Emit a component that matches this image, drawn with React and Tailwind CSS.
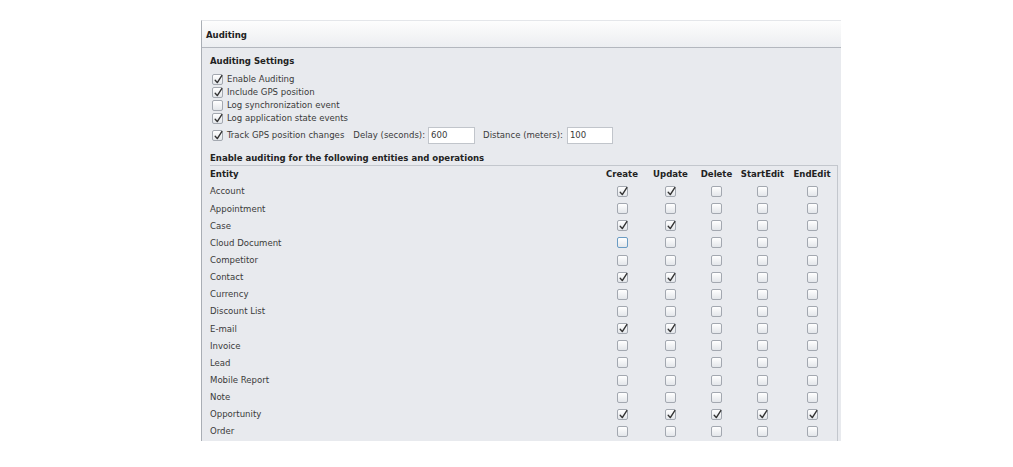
import React from "react";

const font = { fontFamily: '"DejaVu Sans Condensed", "DejaVu Sans", sans-serif' };

function Check({ checked, focus }) {
  return (
    <span
      className={
        "relative inline-flex w-[11px] h-[11px] rounded-[2px] border bg-gradient-to-b from-white to-[#e3e6ea] " +
        (focus ? "border-[#6a9cc4]" : "border-[#a3a8b0]")
      }
    >
      {checked ? (
        <svg viewBox="0 0 11 11" className="absolute left-[0px] top-[-1px] w-[11px] h-[11px]">
          <path d="M2.2 6.2 L4.3 8.6 L8.8 1.6" fill="none" stroke="#333" strokeWidth="1.4" strokeLinecap="round" strokeLinejoin="round" />
        </svg>
      ) : null}
    </span>
  );
}

const rows = [
  ["Account", [1, 1, 0, 0, 0]],
  ["Appointment", [0, 0, 0, 0, 0]],
  ["Case", [1, 1, 0, 0, 0]],
  ["Cloud Document", [0, 0, 0, 0, 0], true],
  ["Competitor", [0, 0, 0, 0, 0]],
  ["Contact", [1, 1, 0, 0, 0]],
  ["Currency", [0, 0, 0, 0, 0]],
  ["Discount List", [0, 0, 0, 0, 0]],
  ["E-mail", [1, 1, 0, 0, 0]],
  ["Invoice", [0, 0, 0, 0, 0]],
  ["Lead", [0, 0, 0, 0, 0]],
  ["Mobile Report", [0, 0, 0, 0, 0]],
  ["Note", [0, 0, 0, 0, 0]],
  ["Opportunity", [1, 1, 1, 1, 1]],
  ["Order", [0, 0, 0, 0, 0]],
];

const cols = [
  ["Create", "w-[48px]"],
  ["Update", "w-[49px]"],
  ["Delete", "w-[43px]"],
  ["StartEdit", "w-[49px]"],
  ["EndEdit", "w-[50px]"],
];

const settings = [
  ["Enable Auditing", true],
  ["Include GPS position", true],
  ["Log synchronization event", false],
  ["Log application state events", true],
];

export default function App() {
  return (
    <div className="w-[1013px] h-[467px] bg-white overflow-hidden text-[9.5px] text-[#3a3a3a]" style={font}>
      <div className="ml-[201px] mt-[20px] w-[640px] border-t border-[#e4e6ea] border-l border-l-[#a9aeb5] bg-[#e8eaee]">
        <div className="h-[27px] flex items-center pt-[3px] pl-[4px] bg-gradient-to-b from-[#fdfdfd] to-[#eceef1] border-b border-[#b3b7be] font-bold text-[#222]">
          Auditing
        </div>
        <div className="pl-[8px]">
          <div className="h-[21px] flex items-end pb-[1px] font-bold text-[#222]">Auditing Settings</div>
          <div className="flex flex-col pt-[4px]">
            {settings.map(([label, c]) => (
              <div key={label} className="h-[13px] flex items-center gap-[4px] pl-[2px]">
                <Check checked={c} />
                <span>{label}</span>
              </div>
            ))}
            <div className="h-[21px] flex items-center pl-[2px]">
              <Check checked />
              <span className="ml-[4px]">Track GPS position changes</span>
              <span className="ml-[9px]">Delay (seconds):</span>
              <span className="ml-[3px] w-[47px] h-[17px] bg-white border border-[#c1c5cb] flex items-center pl-[2px]">600</span>
              <span className="ml-[8px]">Distance (meters):</span>
              <span className="ml-[4px] w-[46px] h-[17px] bg-white border border-[#c1c5cb] flex items-center pl-[2px]">100</span>
            </div>
          </div>
          <div className="h-[20px] flex items-center pt-[6px] font-bold text-[#222] border-b border-[#c3c7cd] mr-[3px]">
            Enable auditing for the following entities and operations
          </div>
        </div>
        <div className="pl-[8px] mr-[3px] border-r border-[#c3c7cd]">
          <div className="h-[17px] flex items-center font-bold text-[#222]">
            <div className="flex-1">Entity</div>
            {cols.map(([c, w]) => (
              <div key={c} className={w + " text-center"}>{c}</div>
            ))}
          </div>
          {rows.map(([name, vals, focus]) => (
            <div key={name} className="h-[17.15px] flex items-center">
              <div className="flex-1">{name}</div>
              {cols.map(([c, w], i) => (
                <div key={c} className={w + " flex justify-center"}>
                  <Check checked={!!vals[i]} focus={focus && i === 0} />
                </div>
              ))}
            </div>
          ))}
          <div className="h-[1px]" />
        </div>
      </div>
    </div>
  );
}
